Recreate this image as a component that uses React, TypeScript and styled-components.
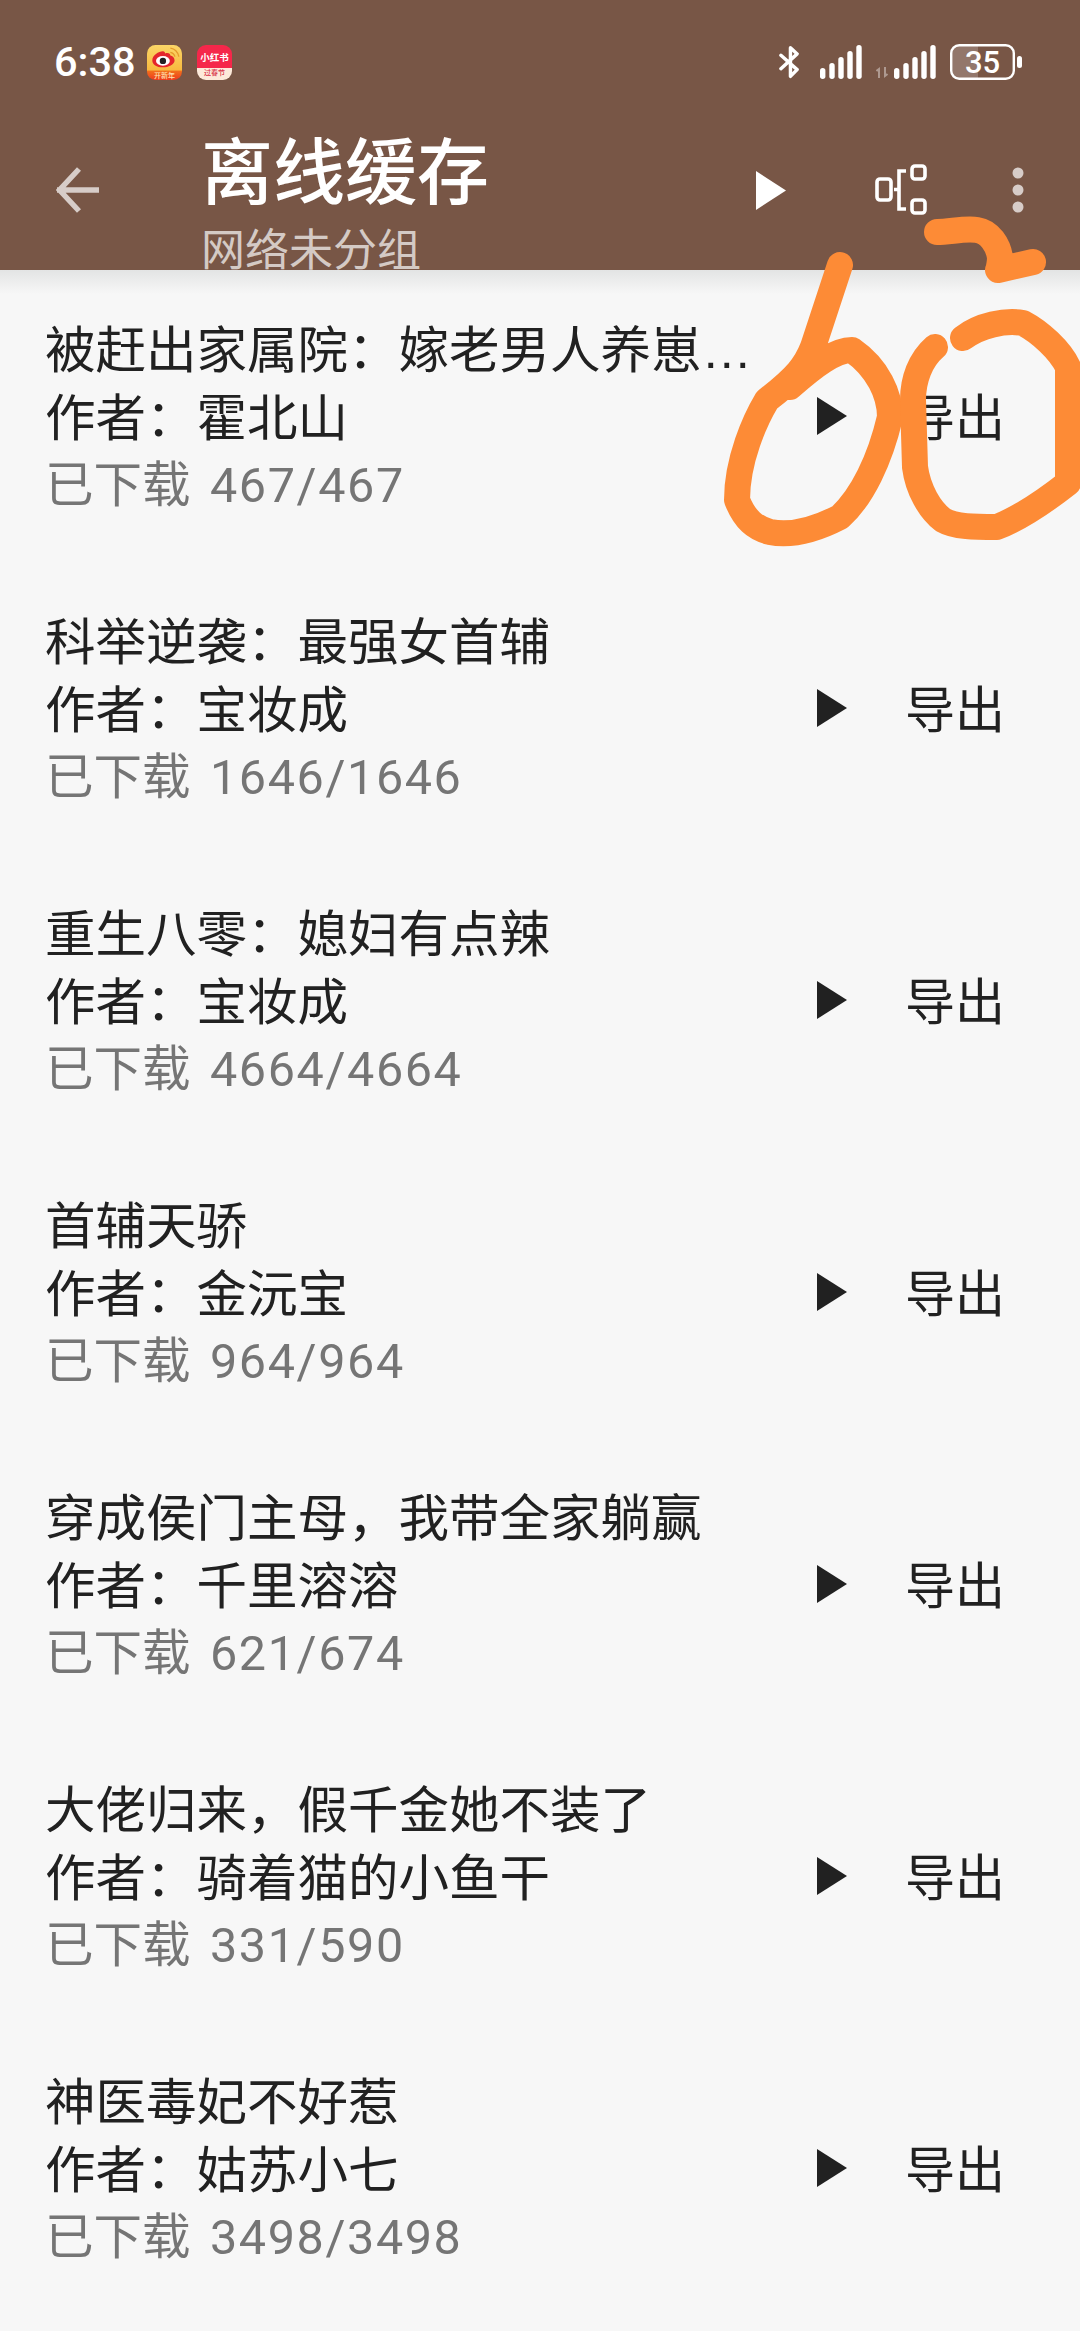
import React from "react";
import styled, { createGlobalStyle } from "styled-components";

const Global = createGlobalStyle`
  html, body { margin: 0; padding: 0; background: #f7f7f7; }
  body { font-family: Roboto, "Noto Sans CJK SC", sans-serif; }
`;

const Page = styled.div`
  position: relative;
  width: 1080px;
  height: 2331px;
  overflow: hidden;
  background: #f7f7f7;
`;

const Header = styled.header`
  height: 270px;
  background: #785646;
  overflow: hidden;
  color: #fff;
`;

const StatusBar = styled.div`
  height: 124px;
  padding: 0 58px 0 54px;
  box-sizing: border-box;
  display: flex;
  align-items: center;
  justify-content: space-between;
`;

const StatusLeft = styled.div`
  display: flex;
  align-items: center;
`;

const StatusRight = styled.div`
  display: flex;
  align-items: center;
  gap: 14px;
`;

const Clock = styled.span`
  font: 500 41.5px/1 Roboto, sans-serif;
  width: 93px;
`;

const WeiboBadge = styled.div`
  position: relative;
  width: 35px;
  height: 35px;
  margin-right: 15px;
`;

const WeiboIcon = styled.svg`
  display: block;
  width: 35px;
  height: 35px;
`;

const WeiboCaption = styled.span`
  position: absolute;
  left: 0;
  right: 0;
  bottom: 1px;
  font: 500 7px/8px "Noto Sans CJK SC", sans-serif;
  color: #ffe3b0;
  text-align: center;
`;

const RedBookIcon = styled.div`
  width: 35px;
  height: 35px;
  border-radius: 9px;
  background: linear-gradient(#f5274a 66%, #fde9da 66%);
  color: #fff;
  display: flex;
  flex-direction: column;
  align-items: center;
  overflow: hidden;
`;

const RedBookName = styled.span`
  font: 700 9.500px/11px "Noto Sans CJK SC", sans-serif;
  margin-top: 7px;
  white-space: nowrap;
`;

const RedBookCaption = styled.span`
  font: 500 7px/8px "Noto Sans CJK SC", sans-serif;
  color: #d8344a;
  margin-top: 5px;
  white-space: nowrap;
`;

const BluetoothGlyph = styled.svg`
  width: 21px;
  height: 34px;
  margin-right: 6px;
`;

const Toolbar = styled.div`
  height: 146px;
  display: flex;
  align-items: flex-start;
`;

const BackSlot = styled.div`
  width: 201px;
  padding: 43px 0 0 56px;
  box-sizing: border-box;
`;

const Titles = styled.div`
  flex: 1;
  padding-top: 1px;
`;

const Title = styled.div`
  font: 500 72px/84px "Noto Sans CJK SC", sans-serif;
  color: #fff;
`;

const Subtitle = styled.div`
  font: 400 44px/50px "Noto Sans CJK SC", sans-serif;
  color: rgba(255, 255, 255, 0.7);
  margin-top: 13px;
`;

const ToolIcons = styled.div`
  display: flex;
  align-items: center;
  padding-top: 40px;
  width: 331px;
`;

const TopPlay = styled.svg`
  width: 30px;
  height: 39px;
  margin-left: 7px;
`;

const TreeIcon = styled.svg`
  width: 52px;
  height: 52px;
  margin-left: 89px;
`;

const DotsIcon = styled.svg`
  width: 12px;
  height: 46px;
  margin-left: 85px;
`;

const List = styled.div`
  position: relative;
  background: linear-gradient(#e3e4e4 0, #f7f7f7 24px);
`;

const Row = styled.div`
  height: 292px;
  padding: 16px 75px 0 45px;
  box-sizing: border-box;
  display: flex;
  align-items: center;
`;

const RowText = styled.div`
  flex: 1;
  min-width: 0;
  align-self: flex-start;
  padding-top: 31px;
`;

const BookTitle = styled.div`
  width: 708px;
  font: 400 50.5px/67.500px "Liberation Sans", "Noto Sans CJK SC", sans-serif;
  color: #212121;
  white-space: nowrap;
  overflow: hidden;
  text-overflow: ellipsis;
`;

const Author = styled.div`
  font: 400 50.5px/67.500px "Liberation Sans", "Noto Sans CJK SC", sans-serif;
  color: #212121;
`;

const Progress = styled.div`
  font: 400 48.5px/67.500px "Liberation Sans", "Noto Sans CJK SC", sans-serif;
  color: #757575;
`;

const ProgressCount = styled.span`
  font-family: Roboto, sans-serif;
  letter-spacing: 1.600px;
  margin-left: 6px;
`;

const RowPlay = styled.svg`
  width: 30px;
  height: 38px;
  margin-right: 58px;
  margin-top: -16px;
`;

const ExportLabel = styled.span`
  font: 400 50px/1 "Noto Sans CJK SC", sans-serif;
  color: #212121;
  margin-top: -20px;
`;

const Scribble = styled.svg`
  position: absolute;
  left: 0;
  top: 0;
  pointer-events: none;
`;

const books = [
  { title: "被赶出家属院：嫁老男人养崽带娃日常", author: "霍北山", progress: "467/467" },
  { title: "科举逆袭：最强女首辅", author: "宝妆成", progress: "1646/1646" },
  { title: "重生八零：媳妇有点辣", author: "宝妆成", progress: "4664/4664" },
  { title: "首辅天骄", author: "金沅宝", progress: "964/964" },
  { title: "穿成侯门主母，我带全家躺赢", author: "千里溶溶", progress: "621/674" },
  { title: "大佬归来，假千金她不装了", author: "骑着猫的小鱼干", progress: "331/590" },
  { title: "神医毒妃不好惹", author: "姑苏小七", progress: "3498/3498" },
];

const Bars = () => (
  <>
    <rect x="0" y="23" width="5.400" height="11" rx="2.700" />
    <rect x="9.300" y="18" width="5.400" height="16" rx="2.700" />
    <rect x="18.300" y="12" width="5.400" height="22" rx="2.700" />
    <rect x="27.300" y="6" width="5.400" height="28" rx="2.700" />
    <rect x="36.300" y="0" width="5.400" height="34" rx="2.700" />
  </>
);

export default function App() {
  return (
    <Page>
      <Global />
      <Header>
        <StatusBar>
          <StatusLeft>
            <Clock>6:38</Clock>
            <WeiboBadge>
              <WeiboIcon viewBox="0 0 33 33">
                <defs>
                  <linearGradient id="wb" x1="0" y1="0" x2="0" y2="1">
                    <stop offset="0" stopColor="#fbd667" />
                    <stop offset="0.72" stopColor="#f8b93f" />
                    <stop offset="0.74" stopColor="#f2701c" />
                    <stop offset="1" stopColor="#ee3a1e" />
                  </linearGradient>
                </defs>
                <rect width="33" height="33" rx="8" fill="url(#wb)" />
                <path d="M5 14.500c0-4.500 6-8.500 10-8.500 1.500 0 2 1 2 2 3-1 5 0 5 2 2 .5 4 2 4 4.500 0 4-6 6.500-11 6.500-6 0-10-2.500-10-6.500z" fill="#e4262c" />
                <ellipse cx="15" cy="15" rx="6.500" ry="4.600" fill="#fff" />
                <circle cx="15" cy="15" r="3" fill="#222" />
                <path d="M22 3c4 .5 7 3.500 8 8M22 7c2 .3 3.700 1.700 4.300 4" stroke="#e59a2c" strokeWidth="1.300" fill="none" />
              </WeiboIcon>
              <WeiboCaption>开新年</WeiboCaption>
            </WeiboBadge>
            <RedBookIcon>
              <RedBookName>小红书</RedBookName>
              <RedBookCaption>过春节</RedBookCaption>
            </RedBookIcon>
          </StatusLeft>
          <StatusRight>
            <BluetoothGlyph viewBox="0 0 22 34" fill="none" stroke="#fff" strokeWidth="3.600" strokeLinecap="round" strokeLinejoin="round">
              <path d="M2 10l17 15-7 7V2l7 6.500L2 24" />
            </BluetoothGlyph>
            <svg width="42" height="34" viewBox="0 0 42 34" fill="#fff">
              <Bars />
            </svg>
            <svg width="60" height="34" viewBox="0 0 60 34" fill="#fff">
              <path d="M3 33V24l-2.500 2M9 22v9l2.500-2" stroke="#fff" strokeOpacity="0.4" strokeWidth="2" fill="none" />
              <g transform="translate(18 0)">
                <Bars />
              </g>
            </svg>
            <svg width="72" height="36" viewBox="0 0 72 36">
              <path d="M8 1.500h20V34.500H8a6.500 6.500 0 0 1-6.500-6.500V8A6.500 6.500 0 0 1 8 1.500z" fill="#fff" fillOpacity="0.2" />
              <rect x="1.200" y="1.200" width="62.600" height="33.600" rx="8" fill="none" stroke="#fff" strokeWidth="2.400" />
              <rect x="67" y="12" width="5" height="12" rx="2.500" fill="#fff" />
              <text x="32.500" y="29" textAnchor="middle" fontSize="31" fontWeight="500" fill="#fff" fontFamily="Roboto, sans-serif">35</text>
            </svg>
          </StatusRight>
        </StatusBar>
        <Toolbar>
          <BackSlot>
            <svg width="44" height="46" viewBox="0 0 44 46" fill="none" stroke="#fff" strokeOpacity="0.7" strokeWidth="5.500">
              <path d="M1 23h42M23 2L3.500 23 23 44" />
            </svg>
          </BackSlot>
          <Titles>
            <Title>离线缓存</Title>
            <Subtitle>网络未分组</Subtitle>
          </Titles>
          <ToolIcons>
            <TopPlay viewBox="0 0 30 38" preserveAspectRatio="none">
              <path d="M0 0l30 19L0 38z" fill="#fff" />
            </TopPlay>
            <TreeIcon viewBox="0 0 52 52" fill="none" stroke="#fff" strokeWidth="3.600">
              <rect x="2" y="15" width="14" height="21" rx="3" />
              <rect x="37" y="2" width="13" height="13" rx="3" />
              <rect x="37" y="36" width="13" height="13" rx="3" />
              <path d="M31 7h-7v38h7M19 25.500h5" />
            </TreeIcon>
            <DotsIcon viewBox="0 0 12 46" fill="#fff" fillOpacity="0.7">
              <circle cx="6" cy="6" r="5.500" />
              <circle cx="6" cy="23" r="5.500" />
              <circle cx="6" cy="40" r="5.500" />
            </DotsIcon>
          </ToolIcons>
        </Toolbar>
      </Header>
      <List>
        {books.map((b) => (
          <Row key={b.title}>
            <RowText>
              <BookTitle>{b.title}</BookTitle>
              <Author>作者：{b.author}</Author>
              <Progress>
                已下载 <ProgressCount>{b.progress}</ProgressCount>
              </Progress>
            </RowText>
            <RowPlay viewBox="0 0 30 38">
              <path d="M0 0l30 19L0 38z" fill="#212121" />
            </RowPlay>
            <ExportLabel>导出</ExportLabel>
          </Row>
        ))}
      </List>
      <Scribble width="1080" height="560" viewBox="0 0 1080 560" fill="none" stroke="#fd8b36" strokeWidth="26" strokeLinecap="round" strokeLinejoin="round">
        <path d="M840 265L813 347C806 365 797 377 767 400C755 420 737 460 737 500C745 520 755 528 770 532C790 536 815 530 840 517C862 497 880 460 890 417C890 395 878 368 852 350C835 350 815 365 790 387" />
        <path d="M935 347C920 360 913 380 913 400L915 467C918 490 930 510 943 520C955 527 975 527 997 527C1015 520 1040 505 1068 483V367C1060 350 1040 332 1023 323C1005 320 980 325 963 338" />
        <path d="M937 232C950 232 965 228 977 230C990 232 998 245 1000 257C1000 262 999 268 998 270L1033 262" />
      </Scribble>
    </Page>
  );
}
